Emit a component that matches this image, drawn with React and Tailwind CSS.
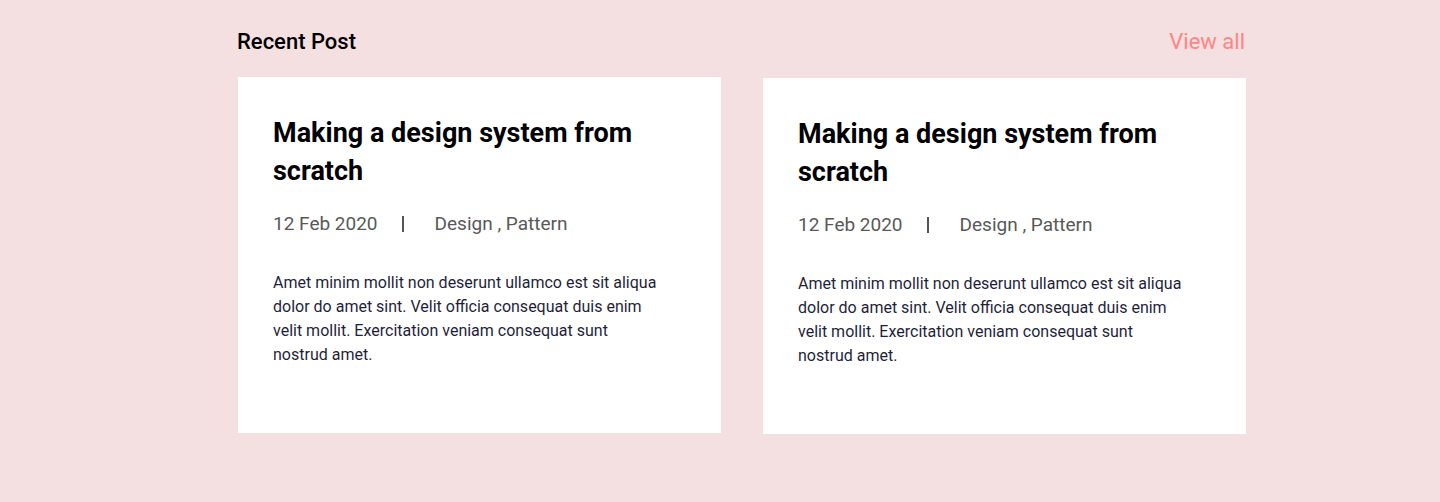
const posts = [
  {
    title: 'Making a design system from scratch',
    date: '12 Feb 2020',
    tags: 'Design , Pattern',
    body: 'Amet minim mollit non deserunt ullamco est sit aliqua dolor do amet sint. Velit officia consequat duis enim velit mollit. Exercitation veniam consequat sunt nostrud amet.',
  },
  {
    title: 'Making a design system from scratch',
    date: '12 Feb 2020',
    tags: 'Design , Pattern',
    body: 'Amet minim mollit non deserunt ullamco est sit aliqua dolor do amet sint. Velit officia consequat duis enim velit mollit. Exercitation veniam consequat sunt nostrud amet.',
  },
];

function PostCard({ post, offset }) {
  return (
    <article className={`bg-white h-[356px] pl-[35px] pr-[56px] pt-[37px] ${offset ? 'mt-px' : ''}`}>
      <h3 className="text-[27px] leading-[38px] font-bold text-black">{post.title}</h3>
      <div className="mt-[20px] flex items-center text-[19px] leading-[27px] text-[#595959]">
        <span>{post.date}</span>
        <span className="ml-[24px] mr-[31px] w-[2px] h-[16px] bg-[#555]" />
        <span>{post.tags}</span>
      </div>
      <p className="mt-[34px] text-[16px] leading-[24px] text-[#1f1f3a]">{post.body}</p>
    </article>
  );
}

export default function App() {
  return (
    <div
      className="min-h-[502px] w-full bg-[#f4e0e1] pt-[28px]"
      style={{ fontFamily: 'Roboto, "Noto Sans", sans-serif' }}
    >
      <section className="ml-[237px] w-[1009px]">
        <div className="flex items-center justify-between pr-px">
          <h2 className="text-[22px] leading-[28px] font-medium text-black">Recent Post</h2>
          <a href="#" className="text-[22px] leading-[28px] text-[#ff8585]">View all</a>
        </div>
        <div className="mt-[21px] grid grid-cols-2 gap-[42px] items-start pl-px">
          {posts.map((p, i) => (
            <PostCard key={i} post={p} offset={i === 1} />
          ))}
        </div>
      </section>
    </div>
  );
}
